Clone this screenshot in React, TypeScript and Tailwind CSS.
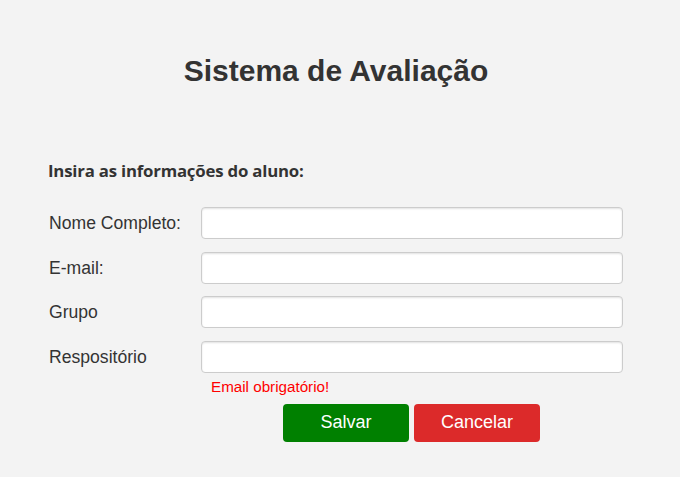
const fields = ["Nome Completo:", "E-mail:", "Grupo", "Respositório"];

export default function App() {
	return (
		<div className="min-h-[477px] w-full bg-[#f3f3f3] text-[#333] font-['Liberation_Sans',Arial,sans-serif]">
			{/* Title */}
			<h1 className="pt-[52px] text-center text-[30px] font-bold leading-[38px] pr-[8px]">
				Sistema de Avaliação
			</h1>

			<div className="pl-[48px] pt-[70px]">
				<h2 className="text-[16.8px] font-bold leading-[22px] font-['Open_Sans','Noto_Sans',sans-serif] tracking-[-0.2px]">
					Insira as informações do aluno:
				</h2>

				<form className="mt-[25px] flex flex-col">
					{fields.map((label, i) => (
						<div key={label} className={`flex items-center ${i > 0 ? "mt-[12.5px]" : ""}`}>
							<label className="w-[153px] pl-px text-[17.6px] leading-[20px]">{label}</label>
							<input
								type="text"
								className="h-[32px] w-[422px] rounded-[4px] border border-[#ccc] bg-white px-2 shadow-[inset_0_1px_2px_rgba(0,0,0,0.12)] outline-none"
							/>
						</div>
					))}

					<div className="ml-[163px] mt-[5px] text-[15.2px] leading-[18px] text-[#ff0000]">
						Email obrigatório!
					</div>

					<div className="ml-[235px] mt-[8px] flex gap-[5px]">
						<button
							type="button"
							className="h-[38px] w-[126px] rounded-[4px] bg-[#008000] text-[18px] text-white"
						>
							Salvar
						</button>
						<button
							type="button"
							className="h-[38px] w-[126px] rounded-[4px] bg-[#dc2a2a] text-[18px] text-white"
						>
							Cancelar
						</button>
					</div>
				</form>
			</div>
		</div>
	);
}
